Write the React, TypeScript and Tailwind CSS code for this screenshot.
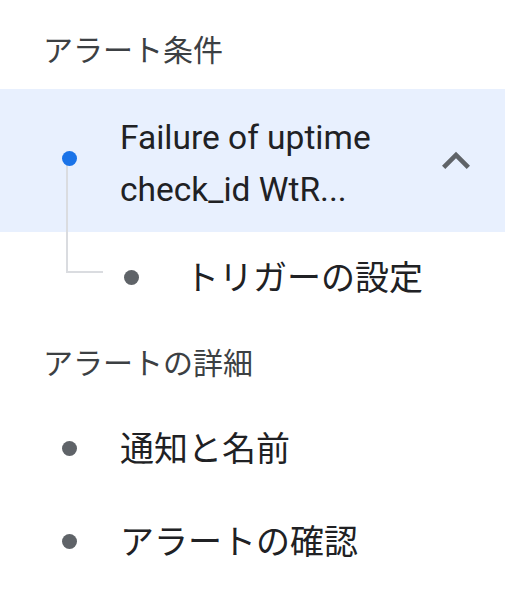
import React from "react";

const font = { fontFamily: 'Roboto, "Noto Sans CJK JP", "Noto Sans", sans-serif' };

export default function App() {
  return (
    <div className="w-[505px] h-[594px] bg-white overflow-hidden" style={font}>
      <div className="pt-[31px] pl-[43px] text-[30px] leading-[40px] text-[#3c4043]">アラート条件</div>

      <div className="relative mt-[18px]">
        <div className="absolute left-[66px] top-[76px] w-[37px] h-[108px] border-l-2 border-b-2 border-[#dadce0]" />
        <div className="flex items-center h-[143px] bg-[#e8f0fe]">
          <div className="ml-[62px] mb-[5px] w-[15px] h-[15px] rounded-full bg-[#1a73e8] shrink-0 relative z-10" />
          <div className="ml-[43px] mt-[6px] flex-1 text-[33.5px] leading-[52px] text-[#202124]">
            <div>Failure of uptime</div>
            <div>check_id WtR...</div>
          </div>
          <svg viewBox="0 0 24 24" className="w-[56px] h-[56px] mr-[21px] shrink-0" fill="#5f6368">
            <path d="M12 8l-6 6 1.41 1.41L12 10.83l4.59 4.58L18 14z" />
          </svg>
        </div>
        <div className="flex items-center h-[88px]">
          <div className="ml-[124px] mt-[2px] w-[15px] h-[15px] rounded-full bg-[#5f6368] shrink-0" />
          <div className="ml-[46px] mt-[4px] text-[34px] leading-[44px] text-[#202124]">トリガーの設定</div>
        </div>
      </div>

      <div className="mt-[24px] pl-[43px] text-[30px] leading-[40px] text-[#3c4043]">アラートの詳細</div>

      <div className="mt-[16px]">
        <div className="flex items-center h-[93px]">
          <div className="ml-[62px] mt-[4px] w-[15px] h-[15px] rounded-full bg-[#5f6368] shrink-0" />
          <div className="ml-[43px] mt-[4px] text-[34px] leading-[44px] text-[#202124]">通知と名前</div>
        </div>
        <div className="flex items-center h-[93px]">
          <div className="ml-[62px] mt-[4px] w-[15px] h-[15px] rounded-full bg-[#5f6368] shrink-0" />
          <div className="ml-[43px] mt-[4px] text-[34px] leading-[44px] text-[#202124]">アラートの確認</div>
        </div>
      </div>
    </div>
  );
}
